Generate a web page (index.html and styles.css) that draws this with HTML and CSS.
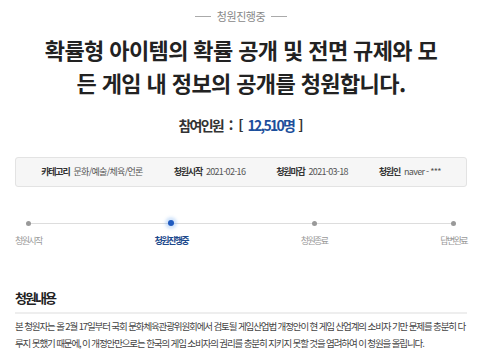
FILE: index.html
```html
<!DOCTYPE html>
<html lang="ko">
  <head>
    <meta charset="UTF-8" />
    <title>청원진행중</title>
    <link rel="stylesheet" href="styles.css">
  </head>
  <body>
    <div class="petition">
      <div class="status"><span>청원진행중</span></div>

      <h1 class="petition-title">
        확률형 아이템의 확률 공개 및 전면 규제와 모든 게임 내 정보의 공개를 청원합니다.
      </h1>

      <div class="count">
        <span class="count-label">참여인원</span>
        <span class="colon">:</span>
        <span class="bracket">[</span>
        <span class="count-num">12,510명</span>
        <span class="bracket">]</span>
      </div>

      <div class="info-box">
        <div class="info-item"><strong>카테고리</strong><span>문화/예술/체육/언론</span></div>
        <div class="info-item"><strong>청원시작</strong><span>2021-02-16</span></div>
        <div class="info-item"><strong>청원마감</strong><span>2021-03-18</span></div>
        <div class="info-item"><strong>청원인</strong><span>naver - ***</span></div>
      </div>

      <div class="steps">
        <div class="step">
          <div class="dot-row"><i class="dot"></i></div>
          <div class="step-name">청원시작</div>
        </div>
        <div class="step active">
          <div class="dot-row"><i class="dot"></i></div>
          <div class="step-name">청원진행중</div>
        </div>
        <div class="step">
          <div class="dot-row"><i class="dot"></i></div>
          <div class="step-name">청원종료</div>
        </div>
        <div class="step">
          <div class="dot-row"><i class="dot"></i></div>
          <div class="step-name">답변완료</div>
        </div>
      </div>

      <div class="content">
        <h3>청원내용</h3>
        <p>
          본 청원자는 올 2월 17일부터 국회 문화체육관광위원회에서 검토될 게임산업법 개정안이 현 게임 산업계의 소비자 기만 문제를 충분히 다루지 못했기 때문에, 이 개정안만으로는 한국의 게임 소비자의 권리를 충분히 지키지 못할 것을 염려하여 이 청원을 올립니다.
        </p>
      </div>
    </div>
  </body>
</html>
```

FILE: styles.css
```css
body {
  margin: 0;
  padding: 0;
  background: #fff;
  font-family: "Noto Sans CJK KR", "Noto Sans", sans-serif;
  color: #333;
}

.petition {
  padding: 0 13px 0 15px;
}

.status {
  margin-top: 9px;
  display: flex;
  justify-content: center;
  align-items: center;
  gap: 6px;
  font-size: 11px;
  line-height: 14px;
  letter-spacing: -0.4px;
  color: #888;
}

.status::before,
.status::after {
  content: "";
  width: 16px;
  height: 1px;
  background: #aaa;
}

.petition-title {
  max-width: 402px;
  margin: 10px auto 0;
  font-size: 22px;
  line-height: 33px;
  letter-spacing: -0.6px;
  font-weight: bold;
  text-align: center;
  word-break: break-all;
  color: #222;
}

.count {
  margin-top: 15px;
  text-align: center;
  font-size: 14px;
  line-height: 22px;
  font-weight: bold;
  color: #333;
}

.count-label {
  letter-spacing: -1.8px;
}

.colon {
  margin: 0 1px 0 2px;
}

.count-num {
  color: #1d4f9c;
  letter-spacing: -1.7px;
}

.info-box {
  margin-top: 21px;
  padding: 7px 0;
  background: #f6f6f6;
  border: 1px solid #e3e3e3;
  border-radius: 3px;
  display: flex;
  justify-content: center;
  gap: 31px;
  font-size: 9px;
  line-height: 14px;
}

.info-item {
  display: flex;
  gap: 4px;
}

.info-item strong {
  color: #333;
  letter-spacing: -1.2px;
}

.info-item span {
  color: #555;
  letter-spacing: -0.7px;
}

.steps {
  margin-top: 31px;
  position: relative;
  display: flex;
  justify-content: space-between;
}

.steps::before {
  content: "";
  position: absolute;
  left: 14px;
  right: 15px;
  top: 5px;
  height: 1px;
  background: #ddd;
}

.step {
  display: flex;
  flex-direction: column;
  align-items: center;
}

.dot-row {
  height: 10px;
  display: flex;
  align-items: center;
  position: relative;
}

.dot {
  width: 5px;
  height: 5px;
  border-radius: 50%;
  background: #999;
}

.step.active .dot {
  width: 6px;
  height: 6px;
  background: #1f5bc0;
  box-shadow: 0 0 3px 3px rgba(80, 150, 240, 0.25);
}

.step-name {
  margin-top: 6px;
  font-size: 9px;
  line-height: 14px;
  letter-spacing: -1.6px;
  color: #999;
}

.step.active .step-name {
  color: #1d4a8c;
  font-weight: bold;
}

.content h3 {
  margin: 41px 0 0;
  padding-bottom: 5px;
  border-bottom: 2px solid #eee;
  font-size: 13px;
  line-height: 18px;
  letter-spacing: -2px;
  color: #222;
}

.content p {
  margin: 4px 0 0;
  font-size: 9.5px;
  line-height: 17px;
  letter-spacing: -1.12px;
  word-break: break-all;
  color: #444;
}
```
